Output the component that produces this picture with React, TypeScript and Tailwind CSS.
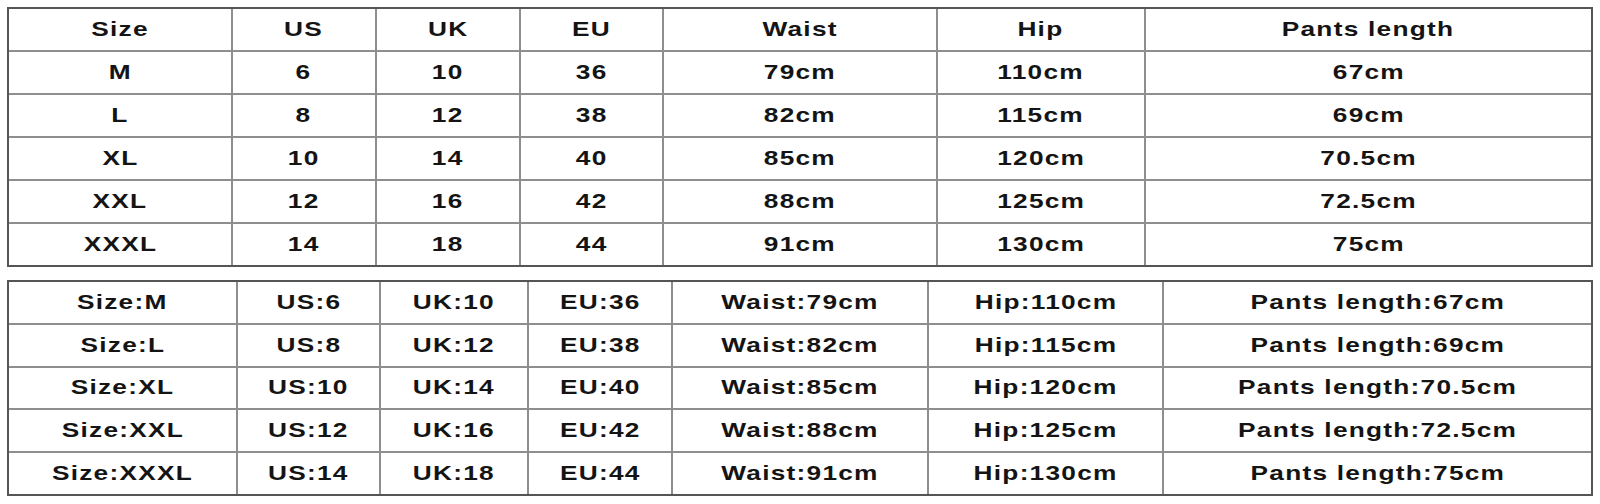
const sizes = ["M", "L", "XL", "XXL", "XXXL"];
const us = ["6", "8", "10", "12", "14"];
const uk = ["10", "12", "14", "16", "18"];
const eu = ["36", "38", "40", "42", "44"];
const waist = ["79cm", "82cm", "85cm", "88cm", "91cm"];
const hip = ["110cm", "115cm", "120cm", "125cm", "130cm"];
const pants = ["67cm", "69cm", "70.5cm", "72.5cm", "75cm"];

const headers = ["Size", "US", "UK", "EU", "Waist", "Hip", "Pants length"];

function Cell({ text }: { text: string }) {
  return (
    <div className="flex items-center justify-center bg-white pb-[2px]">
      <span className="inline-block scale-x-[1.25] whitespace-nowrap text-[21px] font-bold leading-none tracking-[1px] text-[#141414]">
        {text}
      </span>
    </div>
  );
}

export default function App() {
  const rows1 = sizes.map((s, i) => [s, us[i], uk[i], eu[i], waist[i], hip[i], pants[i]]);
  const rows2 = sizes.map((s, i) => [
    `Size:${s}`,
    `US:${us[i]}`,
    `UK:${uk[i]}`,
    `EU:${eu[i]}`,
    `Waist:${waist[i]}`,
    `Hip:${hip[i]}`,
    `Pants length:${pants[i]}`,
  ]);

  return (
    <div
      className="min-h-[504px] w-[1600px] bg-white pl-[7px] pt-[7px]"
      style={{ fontFamily: '"Liberation Sans", Arial, sans-serif' }}
    >
      <div className="w-[1586px] border-2 border-[#555]">
        <div className="grid grid-cols-[222px_141.5px_142.9px_140.9px_271.4px_206.2px_445.1px] grid-rows-[repeat(6,41px)] gap-[2px] bg-[#8e8e8e]">
          {headers.map((h) => (
            <Cell key={h} text={h} />
          ))}
          {rows1.flat().map((t, i) => (
            <Cell key={i} text={t} />
          ))}
        </div>
      </div>

      <div className="mt-[13px] w-[1586px] border-2 border-[#555]">
        <div className="grid grid-cols-[227px_141px_145.6px_142.4px_254px_233.5px_426.5px] grid-rows-[repeat(5,40.8px)] gap-[2px] bg-[#8e8e8e]">
          {rows2.flat().map((t, i) => (
            <Cell key={i} text={t} />
          ))}
        </div>
      </div>
    </div>
  );
}
